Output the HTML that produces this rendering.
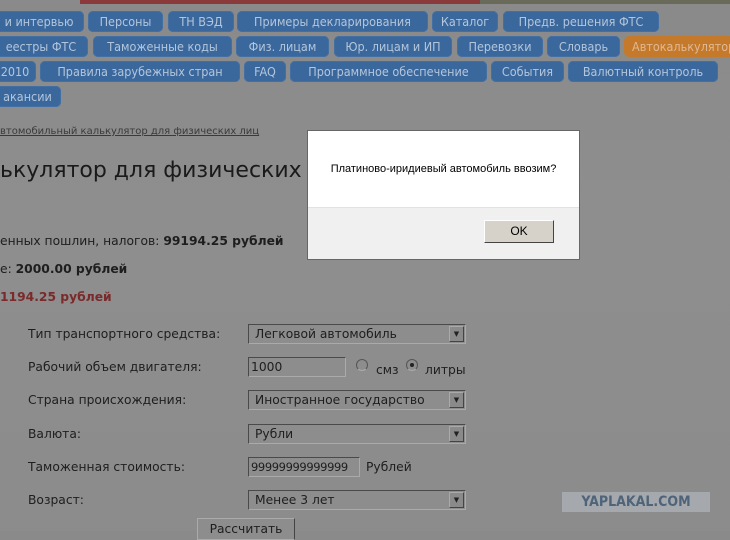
<!DOCTYPE html><html><head><meta charset="utf-8"><style>
body{margin:0;width:730px;height:531px;overflow:hidden;background:linear-gradient(#8a8a8a,#8e8e8e 40%,#8c8c8c);position:relative;font-family:"DejaVu Sans","Liberation Sans",sans-serif;}
.a{position:absolute;white-space:nowrap}
.t{position:absolute;height:21px;background:#3a679c;border-radius:5px;color:#b4c6db;font-family:"DejaVu Sans Condensed","DejaVu Sans",sans-serif;font-size:12.5px;line-height:21px;text-align:center;box-shadow:inset 0 0 0 1px #446fa3;}
.l{font-size:12.3px;color:#1e1e1e}
.s{position:absolute;height:20px;background:#8d8d8d;border:1px solid #4a4a4a;border-right-color:#aaa;border-bottom-color:#aaa;font-size:12.3px;line-height:19px;color:#1e1e1e;padding-left:6px;box-sizing:border-box}
.ar{position:absolute;right:1px;top:1px;width:15px;height:16px;background:#8a8a8a;border:1px solid #aaa;border-right-color:#444;border-bottom-color:#444;box-sizing:border-box;font-size:7px;line-height:14px;text-align:center;color:#222}
.dlgtxt{font-family:"Liberation Sans",sans-serif;font-size:11px}
.yap{font-family:"DejaVu Sans Condensed","DejaVu Sans",sans-serif;font-weight:bold;font-size:14px;line-height:20px}
</style></head><body>
<div class="a" style="left:80px;top:0;width:400px;height:4px;background:#8a3a3a"></div>
<div class="a" style="left:480px;top:0;width:250px;height:4px;background:#6a6a5a"></div>
<div class="t" style="left:-6px;top:11px;width:90px">и интервью</div>
<div class="t" style="left:88px;top:11px;width:75px">Персоны</div>
<div class="t" style="left:168px;top:11px;width:66px">ТН ВЭД</div>
<div class="t" style="left:237px;top:11px;width:191px">Примеры декларирования</div>
<div class="t" style="left:432px;top:11px;width:66px">Каталог</div>
<div class="t" style="left:503px;top:11px;width:156px">Предв. решения ФТС</div>
<div class="t" style="left:-6px;top:36px;width:94px">еестры ФТС</div>
<div class="t" style="left:93px;top:36px;width:139px">Таможенные коды</div>
<div class="t" style="left:236px;top:36px;width:93px">Физ. лицам</div>
<div class="t" style="left:334px;top:36px;width:118px">Юр. лицам и ИП</div>
<div class="t" style="left:457px;top:36px;width:86px">Перевозки</div>
<div class="t" style="left:547px;top:36px;width:73px">Словарь</div>
<div class="t" style="left:624px;top:36px;width:120px;background:#c47a2a;color:#e0b894;box-shadow:none;text-align:left;padding-left:8px">Автокалькулятор</div>
<div class="t" style="left:-6px;top:61px;width:42px">2010</div>
<div class="t" style="left:40px;top:61px;width:200px">Правила зарубежных стран</div>
<div class="t" style="left:244px;top:61px;width:42px">FAQ</div>
<div class="t" style="left:290px;top:61px;width:197px">Программное обеспечение</div>
<div class="t" style="left:491px;top:61px;width:73px">События</div>
<div class="t" style="left:568px;top:61px;width:150px">Валютный контроль</div>
<div class="t" style="left:-6px;top:86px;width:67px">акансии</div>
<div class="a" style="left:0;top:126px;font-size:10px;color:#3a3a3a;text-decoration:underline">втомобильный калькулятор для физических лиц</div>
<div class="a" style="left:0;top:158px;font-size:22px;color:#1a1a1a">ькулятор для физических</div>
<div class="a l" style="left:0;top:234px">енных пошлин, налогов: <b>99194.25 рублей</b></div>
<div class="a l" style="left:0;top:262px">е: <b>2000.00 рублей</b></div>
<div class="a l" style="left:0;top:290px;color:#7a2a2a"><b>1194.25 рублей</b></div>
<div class="a l" style="left:28px;top:327px">Тип транспортного средства:</div>
<div class="a l" style="left:28px;top:360px">Рабочий объем двигателя:</div>
<div class="a l" style="left:28px;top:393px">Страна происхождения:</div>
<div class="a l" style="left:28px;top:427px">Валюта:</div>
<div class="a l" style="left:28px;top:460px">Таможенная стоимость:</div>
<div class="a l" style="left:28px;top:493px">Возраст:</div>
<div class="s" style="left:248px;top:324px;width:218px">Легковой автомобиль<div class="ar">▼</div></div>
<div class="s" style="left:248px;top:357px;width:98px;padding-left:2px">1000</div>
<div class="a" style="left:356px;top:359px;width:10px;height:10px;border-radius:50%;border:1px solid #555;border-bottom-color:#aaa"></div>
<div class="a l" style="left:376px;top:363px">смз</div>
<div class="a" style="left:406px;top:359px;width:10px;height:10px;border-radius:50%;border:1px solid #555;border-bottom-color:#aaa"><div class="a" style="left:3px;top:3px;width:4px;height:4px;border-radius:50%;background:#222"></div></div>
<div class="a l" style="left:425px;top:363px">литры</div>
<div class="s" style="left:248px;top:390px;width:218px">Иностранное государство<div class="ar">▼</div></div>
<div class="s" style="left:248px;top:424px;width:218px">Рубли<div class="ar">▼</div></div>
<div class="s" style="left:248px;top:457px;width:112px;padding-left:2px;font-size:11.5px;letter-spacing:-0.4px">99999999999999</div>
<div class="a l" style="left:366px;top:460px">Рублей</div>
<div class="s" style="left:248px;top:490px;width:218px">Менее 3 лет<div class="ar">▼</div></div>
<div class="a" style="left:197px;top:518px;width:96px;height:20px;background:#8d8d8d;border:1px solid #aaa;border-right-color:#444;font-size:12.3px;text-align:center;line-height:20px;color:#1e1e1e">Рассчитать</div>
<div class="a yap" style="left:562px;top:492px;width:148px;height:20px;background:#a5a9ae;color:#4f6478;text-align:center">YAPLAKAL.COM</div>
<div class="a" style="left:307px;top:130px;width:273px;height:130px;background:#fff;border:1px solid #666;box-sizing:border-box">
<div class="a dlgtxt" style="left:0;right:0;top:32px;text-align:center;color:#000">Платиново-иридиевый автомобиль ввозим?</div>
<div class="a" style="left:0;right:0;top:76px;bottom:0;background:#f0f0f0;border-top:1px solid #e2e2e2"></div>
<div class="a dlgtxt" style="left:176px;top:89px;width:70px;height:23px;background:#d6d2ca;border:1px solid #fff;border-right-color:#444;border-bottom-color:#444;box-sizing:border-box;text-align:center;font-size:12px;line-height:21px">OK</div>
</div>
</body></html>
